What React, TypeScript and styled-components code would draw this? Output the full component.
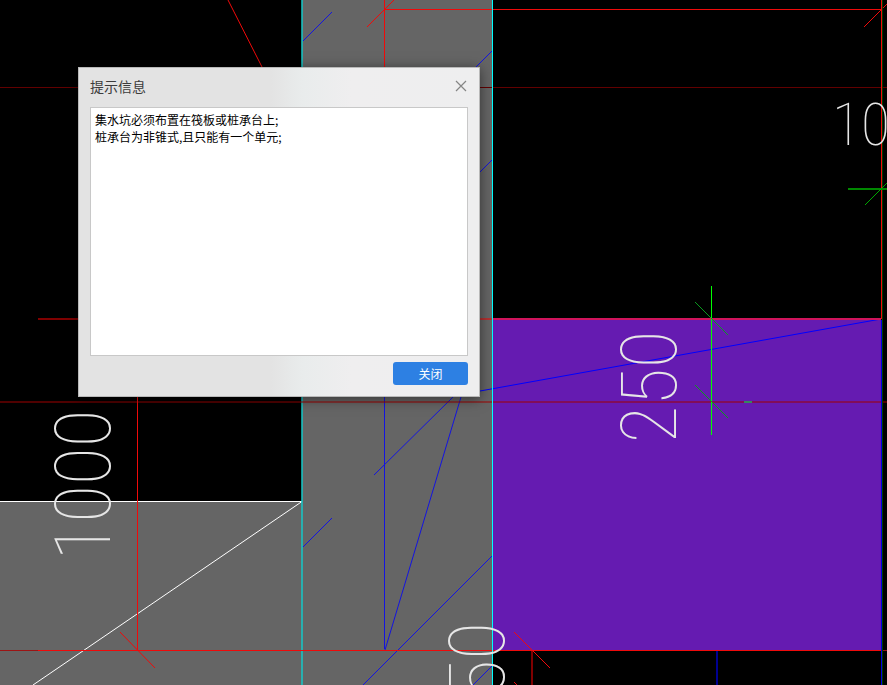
import React from 'react';
import styled, { createGlobalStyle } from 'styled-components';

const GlobalStyle = createGlobalStyle`
  html, body, #root { height: 100%; }
  body { margin: 0; background: #000; overflow: hidden; }
  * { box-sizing: border-box; }
`;

const uiFont = `'Noto Sans CJK SC', sans-serif`;

const Workspace = styled.main`
  position: relative;
  min-height: 100vh;
  overflow: hidden;
  background: #000;
  font-family: ${uiFont};
`;

const Drawing = styled.svg`
  position: absolute;
  inset: 0;
  width: 100%;
  height: 100%;
`;

const Stroke = styled.path<{ $color: string; $width?: number }>`
  fill: none;
  stroke: ${(p) => p.$color};
  stroke-width: ${(p) => p.$width ?? 1};
`;

const Dimension = styled.text<{ $size: number }>`
  fill: #e6e6e6;
  font-family: 'Roboto Condensed', Roboto, sans-serif;
  font-weight: 100;
  font-size: ${(p) => p.$size}px;
`;

const Dialog = styled.section`
  position: absolute;
  top: 67px;
  left: 78px;
  display: flex;
  flex-direction: column;
  width: 402px;
  max-width: calc(100% - 78px);
  padding: 0 11px 11px;
  border: 1px solid #b9b9b9;
  background: linear-gradient(90deg, #e3e3e3 48%, #e9ecec 56%, #efeeef 68%, #eeeeef);
  box-shadow: 0 2px 12px rgba(0, 0, 0, 0.5);
`;

const TitleBar = styled.header`
  display: flex;
  align-items: center;
  justify-content: space-between;
  height: 39px;
  padding-bottom: 3px;
`;

const Title = styled.h1`
  margin: 0;
  color: #3c3c3c;
  font-size: 14px;
  font-weight: 400;
  line-height: 20px;
`;

const IconButton = styled.button`
  display: flex;
  padding: 1px;
  border: 0;
  background: none;
  color: #858585;
`;

const Message = styled.textarea`
  display: block;
  width: 100%;
  height: 249px;
  padding: 3px 4px;
  border: 1px solid #c8c8c8;
  border-radius: 0;
  outline: 0;
  resize: none;
  background: #fff;
  color: #000;
  font-family: ${uiFont};
  font-size: 12px;
  line-height: 17px;
`;

const Actions = styled.footer`
  display: flex;
  justify-content: flex-end;
  padding-top: 6px;
`;

const PrimaryButton = styled.button`
  width: 75px;
  height: 23px;
  padding: 0;
  border: 0;
  border-radius: 3px;
  background: #2d80e3;
  color: #fff;
  font-family: ${uiFont};
  font-size: 12px;
  line-height: 23px;
`;

const messageText = '集水坑必须布置在筏板或桩承台上;\n桩承台为非锥式,且只能有一个单元;';

function Plan() {
  return (
    <Drawing aria-label="基础平面图">
      <rect x="302" y="0" width="190" height="100%" fill="#656565" />
      <rect x="0" y="501" width="302" height="100%" fill="#656565" />
      <rect x="493" y="319" width="388" height="331" fill="#651bb1" />

      <Stroke $color="#fff" d="M0 501.5H302M302 501.5L33 685" />
      <Stroke $color="rgba(20,200,200,.75)" $width={2} d="M302 0V2000" />

      <Stroke
        $color="#1414e0"
        d="M303 41L332 12M476 67L492 51M480 172L492 160M303 547L332 518M374 475L453 397M461 397L385 650M363 685L492 556M473 685L492 666M384.5 397V649"
      />
      <Stroke $color="#00f" d="M480 391L881 319" />

      <Stroke $color="rgba(160,0,0,.5)" $width={2} d="M0 402H2000" />
      <Stroke $color="#620000" d="M0 87.5H2000" />
      <Stroke $color="rgba(255,0,0,.5)" $width={2} d="M38 319H492" />
      <Stroke $color="#d0145c" $width={2} d="M492 319H881" />
      <Stroke $color="#9c1414" d="M0 650.5H38M881 650.5H2000" />
      <Stroke
        $color="#f00a0a"
        d="M38 650.5H881M384.5 0V67M384 9.5H882M367 27L395 -1M228 0L262 67M137.5 397V650M120 632L155 668M864 27L891 0M881.5 0V319M514 632L550 668M514 682L518 686"
      />
      <Stroke $color="#800000" $width={2} d="M532 651V2000" />
      <Stroke $color="#000090" $width={2} d="M717 651V2000" />
      <Stroke $color="#0000e0" d="M881.5 320V2000" />
      <Stroke $color="#004000" d="M882.5 0V2000" />
      <Stroke $color="#00ffff" d="M492.5 0V2000" />

      <Stroke $color="#0f0" d="M711.5 286V435" />
      <Stroke $color="#0a9b1e" d="M695 302L728 335M695 385L728 418" />
      <Stroke $color="#36885c" $width={2} d="M744 402H752" />
      <Stroke $color="#008800" $width={2} d="M848 189H2000" />
      <Stroke $color="#00a800" d="M865 205L891 179" />

      <Dimension $size={78} textAnchor="middle" transform="translate(110 485) rotate(-90)">1000</Dimension>
      <Dimension $size={78} textAnchor="middle" transform="translate(676 387) rotate(-90)">250</Dimension>
      <Dimension $size={78} textAnchor="end" transform="translate(504 622) rotate(-90)">50</Dimension>
      <Dimension $size={60} x="832" y="145">10</Dimension>
    </Drawing>
  );
}

export default function App() {
  return (
    <>
      <GlobalStyle />
      <Workspace>
        <Plan />
        <Dialog role="dialog" aria-labelledby="dialog-title">
          <TitleBar>
            <Title id="dialog-title">提示信息</Title>
            <IconButton type="button" aria-label="关闭窗口">
              <svg width="12" height="12" viewBox="0 0 12 12" fill="none" stroke="currentColor" strokeWidth="1.2">
                <path d="M1 1L11 11M11 1L1 11" />
              </svg>
            </IconButton>
          </TitleBar>
          <Message readOnly aria-labelledby="dialog-title" defaultValue={messageText} />
          <Actions>
            <PrimaryButton type="button">关闭</PrimaryButton>
          </Actions>
        </Dialog>
      </Workspace>
    </>
  );
}
